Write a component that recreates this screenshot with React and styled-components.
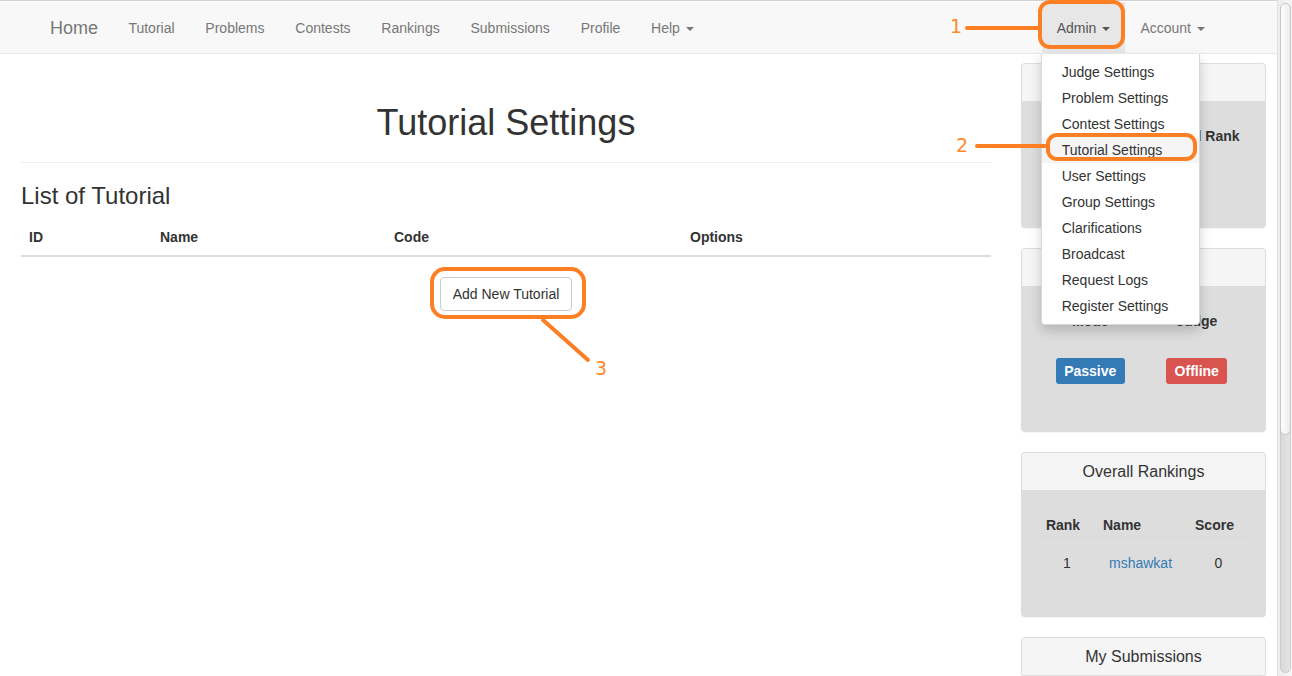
import React from 'react';
import styled, { createGlobalStyle } from 'styled-components';

const GlobalStyle = createGlobalStyle`
  html, body {
    margin: 0;
    padding: 0;
    background: #fff;
    overflow: hidden;
  }
  body {
    font-family: 'Liberation Sans', Arial, Helvetica, sans-serif;
    font-size: 14px;
    line-height: 1.42857;
    color: #333;
  }
  * {
    box-sizing: border-box;
  }
`;

const Shell = styled.div`
  position: relative;
  display: flex;
  width: 1292px;
  height: 676px;
  overflow: hidden;
`;

const Page = styled.div`
  flex: 1;
  min-width: 0;
  border-top: 1px solid #d2d2d2;
  padding-top: 1px;
`;

const Navbar = styled.nav`
  display: flex;
  height: 52px;
  padding: 0 57px 0 35px;
  background-color: #f8f8f8;
  border-bottom: 1px solid #e7e7e7;
`;

const Brand = styled.a`
  padding: 0 15px;
  font-size: 18px;
  line-height: 53px;
  color: #777;
  text-decoration: none;
`;

const NavList = styled.ul`
  display: flex;
  margin: 0;
  padding: 0;
  list-style: none;
  margin-left: ${props => (props.$right ? 'auto' : '0')};
`;

const NavItem = styled.li`
  position: relative;
  height: 51px;
  padding: 0 ${props => (props.$tight ? '15px' : '15.4px')};
  line-height: 53px;
  color: ${props => (props.$open ? '#555' : '#777')};
  background-color: ${props => (props.$open ? '#e7e7e7' : 'transparent')};
`;

const Caret = styled.span`
  display: inline-block;
  width: 0;
  height: 0;
  margin-left: 6px;
  vertical-align: middle;
  border-top: 4px solid;
  border-right: 4px solid transparent;
  border-left: 4px solid transparent;
`;

const DropdownMenu = styled.ul`
  position: absolute;
  top: 51px;
  left: -1px;
  z-index: 20;
  min-width: 159px;
  margin: 0;
  padding: 5px 0;
  list-style: none;
  line-height: 20px;
  background-color: #fff;
  border: 1px solid rgba(0, 0, 0, 0.15);
  border-top-color: #e7e7e7;
  border-radius: 0 0 4px 4px;
  box-shadow: 0 6px 12px rgba(0, 0, 0, 0.175);
`;

const MenuItem = styled.li`
  padding: 3px 20px;
  line-height: 20px;
  color: #333;
  white-space: nowrap;
  background-color: ${props => (props.$active ? '#f5f5f5' : 'transparent')};
`;

const Content = styled.div`
  display: flex;
  gap: 30px;
  padding: 9px 11px 0 21px;
`;

const Main = styled.main`
  width: 970px;
`;

const Title = styled.h1`
  margin: 40px 0 0;
  font-size: 36px;
  font-weight: 500;
  line-height: 40px;
  text-align: center;
`;

const Rule = styled.hr`
  margin: 19px 0 0;
  border: 0;
  border-top: 1px solid #eee;
`;

const Subtitle = styled.h3`
  margin: 20px 0 0;
  font-size: 24px;
  font-weight: 500;
  line-height: 26px;
`;

const TableHead = styled.div`
  display: grid;
  grid-template-columns: 131px 234px 296px 309px;
  margin-top: 10px;
  border-bottom: 2px solid #ddd;
`;

const HeadCell = styled.div`
  padding: 8px;
  font-weight: bold;
  line-height: 20px;
`;

const ButtonRow = styled.div`
  display: flex;
  justify-content: center;
  padding-top: 20px;
`;

const Button = styled.button`
  padding: 6px 12px;
  font-family: inherit;
  font-size: 14px;
  line-height: 20px;
  color: #333;
  background-color: #fff;
  border: 1px solid #ccc;
  border-radius: 4px;
`;

const Sidebar = styled.aside`
  display: flex;
  flex-direction: column;
  gap: 20px;
  width: 245px;
`;

const Panel = styled.section`
  background-color: #ddd;
  border: 1px solid #ddd;
  border-radius: 4px;
  box-shadow: 0 1px 1px rgba(0, 0, 0, 0.05);
  overflow: hidden;
`;

const PanelHeading = styled.div`
  padding: 10px 15px;
  font-size: 16px;
  line-height: 17px;
  text-align: center;
  color: #333;
  background-color: #f5f5f5;
  border-bottom: 1px solid #ddd;
`;

const PanelBody = styled.div`
  padding: 16px 15px 36px;
`;

const MiniTable = styled.div`
  display: grid;
  grid-template-columns: ${props => props.$cols};
`;

const Cell = styled.div`
  padding: ${props => (props.$tall ? '19px 8px 11px' : props.$row ? '10px 8px 7px' : '8px')};
  padding-left: ${props => props.$indent || '8px'};
  font-weight: ${props => (props.$head ? 'bold' : 'normal')};
  line-height: 20px;
  text-align: ${props => props.$align || 'center'};
  box-shadow: ${props => (props.$head && props.$line ? 'inset 0 -1px 0 #e3e3e3' : 'none')};
  white-space: nowrap;
`;

const Label = styled.span`
  display: inline-block;
  padding: 4px 8.5px;
  font-weight: bold;
  font-size: 14px;
  line-height: 18px;
  color: #fff;
  background-color: ${props => props.$color};
  border-radius: 3px;
`;

const Link = styled.a`
  color: #337ab7;
  text-decoration: none;
`;

const Scrollbar = styled.div`
  display: flex;
  width: 15px;
  padding: 3px 1px 3px 2px;
  background: linear-gradient(to right, #ededed, #f7f7f7);
  border-left: 1px solid #e2e2e2;
`;

const Track = styled.div`
  flex: 1;
  background: linear-gradient(to right, #d9d9d9, #e4e4e4);
  border: 1px solid #cbcbcb;
  border-radius: 7px;
`;

const Thumb = styled.div`
  height: 432px;
  margin: -1px;
  background: linear-gradient(to right, #fefefe, #ececec);
  border: 1px solid #c6c6c6;
  border-radius: 7px;
`;

const Annotations = styled.svg`
  position: absolute;
  top: 0;
  left: 0;
  z-index: 50;
  pointer-events: none;
`;

const Marker = styled.text`
  font-family: 'DejaVu Sans', sans-serif;
  font-size: 19px;
  fill: #ff8a2c;
`;

const mainNav = ['Tutorial', 'Problems', 'Contests', 'Rankings', 'Submissions', 'Profile'];

const adminMenu = [
  'Judge Settings',
  'Problem Settings',
  'Contest Settings',
  'Tutorial Settings',
  'User Settings',
  'Group Settings',
  'Clarifications',
  'Broadcast',
  'Request Logs',
  'Register Settings',
];

const ORANGE = '#fd7f23';

const App = () => {
  return (
    <>
      <GlobalStyle />
      <Shell>
        <Page>
          <Navbar>
            <Brand>Home</Brand>
            <NavList>
              {mainNav.map(item => (
                <NavItem key={item}>{item}</NavItem>
              ))}
              <NavItem>
                Help<Caret />
              </NavItem>
            </NavList>
            <NavList $right>
              <NavItem $open $tight>
                Admin<Caret />
                <DropdownMenu>
                  {adminMenu.map(item => (
                    <MenuItem key={item} $active={item === 'Tutorial Settings'}>
                      {item}
                    </MenuItem>
                  ))}
                </DropdownMenu>
              </NavItem>
              <NavItem $tight>
                Account<Caret />
              </NavItem>
            </NavList>
          </Navbar>

          <Content>
            <Main>
              <Title>Tutorial Settings</Title>
              <Rule />
              <Subtitle>List of Tutorial</Subtitle>
              <TableHead>
                <HeadCell>ID</HeadCell>
                <HeadCell>Name</HeadCell>
                <HeadCell>Code</HeadCell>
                <HeadCell>Options</HeadCell>
              </TableHead>
              <ButtonRow>
                <Button>Add New Tutorial</Button>
              </ButtonRow>
            </Main>

            <Sidebar>
              <Panel>
                <PanelHeading>My Info</PanelHeading>
                <PanelBody>
                  <MiniTable $cols="1fr 1fr">
                    <Cell $head>Solved</Cell>
                    <Cell $head>Overall Rank</Cell>
                    <Cell $row>&nbsp;</Cell>
                    <Cell $row>&nbsp;</Cell>
                  </MiniTable>
                </PanelBody>
              </Panel>

              <Panel>
                <PanelHeading>Status</PanelHeading>
                <PanelBody>
                  <MiniTable $cols="1fr 1fr">
                    <Cell $head>Mode</Cell>
                    <Cell $head>Judge</Cell>
                    <Cell $tall>
                      <Label $color="#337ab7">Passive</Label>
                    </Cell>
                    <Cell $tall>
                      <Label $color="#d9534f">Offline</Label>
                    </Cell>
                  </MiniTable>
                </PanelBody>
              </Panel>

              <Panel>
                <PanelHeading>Overall Rankings</PanelHeading>
                <PanelBody>
                  <MiniTable $cols="52px 88px 75px">
                    <Cell $head $line>Rank</Cell>
                    <Cell $head $line $align="left" $indent="14px">Name</Cell>
                    <Cell $head $line>Score</Cell>
                    <Cell $row $indent="16px">1</Cell>
                    <Cell $row $align="left" $indent="20px">
                      <Link>mshawkat</Link>
                    </Cell>
                    <Cell $row $indent="16px">0</Cell>
                  </MiniTable>
                </PanelBody>
              </Panel>

              <Panel>
                <PanelHeading>My Submissions</PanelHeading>
              </Panel>
            </Sidebar>
          </Content>
        </Page>

        <Scrollbar>
          <Track>
            <Thumb />
          </Track>
        </Scrollbar>

        <Annotations width="1292" height="676" viewBox="0 0 1292 676">
          <g fill="none" stroke={ORANGE} strokeWidth="4" strokeLinecap="round">
            <rect x="1040" y="2" width="83" height="45" rx="10" />
            <line x1="967" y1="28" x2="1039" y2="28" />
            <rect x="1048" y="135" width="147" height="24" rx="9" />
            <line x1="977" y1="146" x2="1047" y2="146" />
            <rect x="432" y="269" width="152" height="48" rx="13" />
            <line x1="543" y1="320" x2="588" y2="360" />
          </g>
          <Marker x="950" y="33">1</Marker>
          <Marker x="956" y="152">2</Marker>
          <Marker x="595" y="375">3</Marker>
        </Annotations>
      </Shell>
    </>
  );
};

export default App;
